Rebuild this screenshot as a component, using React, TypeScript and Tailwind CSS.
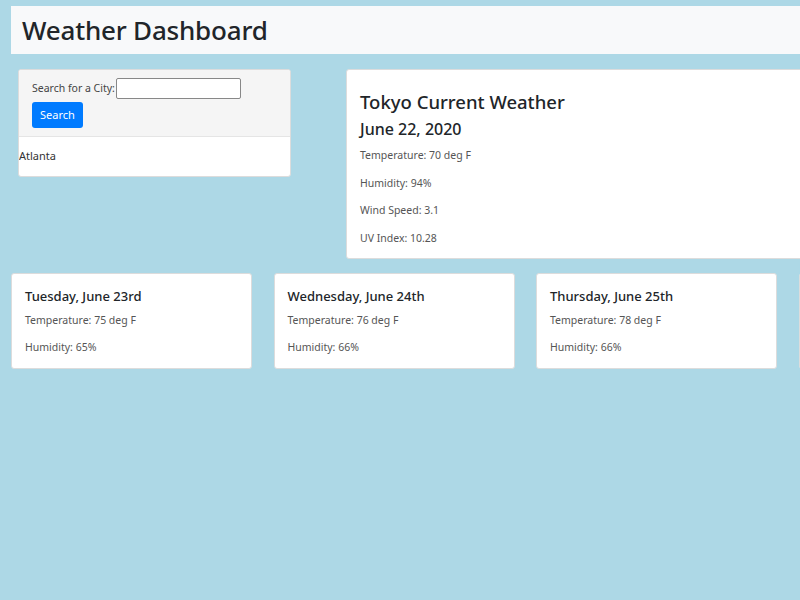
const CURRENT = {
  city: "Tokyo",
  date: "June 22, 2020",
  lines: ["Temperature: 70 deg F", "Humidity: 94%", "Wind Speed: 3.1", "UV Index: 10.28"],
}

const FORECAST = [
  { day: "Tuesday, June 23rd", temp: 75, humidity: 65 },
  { day: "Wednesday, June 24th", temp: 76, humidity: 66 },
  { day: "Thursday, June 25th", temp: 78, humidity: 66 },
  { day: "Friday, June 26th", temp: 79, humidity: 62 },
]

const font = { fontFamily: '"Noto Sans", "Open Sans", sans-serif' }

export default function App() {
  return (
    <div className="w-[800px] h-[600px] overflow-hidden bg-[#add8e6] text-[#212529]" style={font}>
      <div className="pt-[6px] pl-[11px]">
        <header className="h-[48px] w-[820px] bg-[#f8f9fa] flex items-center pl-[11px]">
          <h1 className="text-[26px] font-medium leading-none tracking-[-0.2px]">Weather Dashboard</h1>
        </header>
      </div>

      <div className="flex items-start mt-[15px]">
        <div className="shrink-0 ml-[18px] w-[273px] rounded-[3px] border border-[#dcdcdc] bg-white overflow-hidden">
          <div className="bg-[#f5f5f5] border-b border-[#e5e5e5] pl-[13px] pt-[8px] pb-[8px]">
            <div className="flex items-center text-[10.5px] text-[#444]">
              <span>Search for a City:</span>
              <input className="ml-[1px] w-[125px] h-[21px] border border-[#888] rounded-[2px] bg-white" />
            </div>
            <button className="mt-[3px] h-[26px] px-[8px] rounded-[3px] bg-[#007bff] text-white text-[11px]">Search</button>
          </div>
          <div className="h-[39px] flex items-center text-[11px] text-[#333]">Atlanta</div>
        </div>

        <div className="shrink-0 ml-[55px] w-[470px] h-[190px] rounded-[3px] bg-white border border-[#dcdcdc] pl-[13px] pt-[19px]">
          <h2 className="text-[18.5px] leading-[26px] font-medium">{CURRENT.city} Current Weather</h2>
          <h3 className="text-[16px] leading-[22px] font-medium mt-[3px]">{CURRENT.date}</h3>
          <div className="mt-[7px] flex flex-col gap-[11px] text-[10.5px] leading-[16.5px] text-[#555]">
            {CURRENT.lines.map(l => (
              <p key={l}>{l}</p>
            ))}
          </div>
        </div>
      </div>

      <div className="flex gap-[21.5px] ml-[11px] mt-[14px]">
        {FORECAST.map(f => (
          <div key={f.day} className="shrink-0 w-[241px] h-[96px] rounded-[3px] bg-white border border-[#dcdcdc] pl-[13px] pt-[12px]">
            <h4 className="text-[13px] leading-[20px] font-medium">{f.day}</h4>
            <div className="mt-[6px] flex flex-col gap-[11px] text-[10.5px] leading-[16px] text-[#555]">
              <p>Temperature: {f.temp} deg F</p>
              <p>Humidity: {f.humidity}%</p>
            </div>
          </div>
        ))}
      </div>
    </div>
  )
}
